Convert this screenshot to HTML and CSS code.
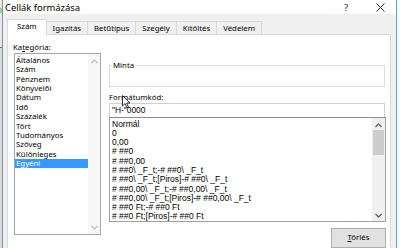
FILE: index.html
```html
<!DOCTYPE html>
<html lang="hu">
<head>
<meta charset="utf-8">
<title>Cellák formázása</title>
<link rel="stylesheet" href="styles.css">
</head>
<body>
<div class="screen">
  <div class="edge-left"></div>
  <div class="dialog">
    <div class="titlebar">
      <span class="title">Cellák formázása</span>
      <span class="help">?</span>
      <svg class="close" width="9" height="9" viewBox="0 0 9 9"><path d="M0.5 0.5 L8.5 8.5 M8.5 0.5 L0.5 8.5" stroke="#2b2b2b" stroke-width="1" fill="none"/></svg>
    </div>
    <div class="body">
      <div class="tabs">
        <div class="tab active">Szám</div>
        <div class="tab">Igazítás</div>
        <div class="tab">Betűtípus</div>
        <div class="tab">Szegély</div>
        <div class="tab">Kitöltés</div>
        <div class="tab">Védelem</div>
      </div>
      <div class="panel">
        <div class="cat">
          <div class="label">Ka<u>t</u>egória:</div>
          <div class="listbox">
            <ul class="cat-items">
              <li>Általános</li>
              <li>Szám</li>
              <li>Pénznem</li>
              <li>Könyvelői</li>
              <li>Dátum</li>
              <li>Idő</li>
              <li>Százalék</li>
              <li>Tört</li>
              <li>Tudományos</li>
              <li>Szöveg</li>
              <li>Különleges</li>
              <li class="selected">Egyéni</li>
            </ul>
            <div class="vscroll light">
              <svg width="7" height="5" viewBox="0 0 7 5"><path d="M0.5 4 L3.5 1 L6.5 4" stroke="#c2c2c2" stroke-width="1.3" fill="none"/></svg>
              <svg width="7" height="5" viewBox="0 0 7 5"><path d="M0.5 1 L3.5 4 L6.5 1" stroke="#c2c2c2" stroke-width="1.3" fill="none"/></svg>
            </div>
          </div>
        </div>
        <div class="right">
          <fieldset class="sample">
            <legend>Minta</legend>
            <div class="sample-body"></div>
          </fieldset>
          <div class="label code-label">Formátumkód:</div>
          <div class="input">"H-"0000</div>
          <div class="fmtlist">
            <ul class="fmt-items">
              <li>Normál</li>
              <li>0</li>
              <li>0,00</li>
              <li># ##0</li>
              <li># ##0,00</li>
              <li># ##0\ _F_t;-# ##0\ _F_t</li>
              <li># ##0\ _F_t;[Piros]-# ##0\ _F_t</li>
              <li># ##0,00\ _F_t;-# ##0,00\ _F_t</li>
              <li># ##0,00\ _F_t;[Piros]-# ##0,00\ _F_t</li>
              <li># ##0 Ft;-# ##0 Ft</li>
              <li># ##0 Ft;[Piros]-# ##0 Ft</li>
            </ul>
            <div class="vscroll">
              <svg width="7" height="5" viewBox="0 0 7 5"><path d="M0.5 4 L3.5 1 L6.5 4" stroke="#606060" stroke-width="1.3" fill="none"/></svg>
              <div class="thumb"></div>
              <div class="track-rest"></div>
              <svg width="7" height="5" viewBox="0 0 7 5"><path d="M0.5 1 L3.5 4 L6.5 1" stroke="#606060" stroke-width="1.3" fill="none"/></svg>
            </div>
          </div>
          <div class="actions">
            <button class="btn"><u>T</u>örlés</button>
          </div>
        </div>
      </div>
    </div>
  </div>
  <div class="edge-right"></div>
  <svg class="cursor" width="9" height="14" viewBox="0 0 9 14"><path d="M0.5 0.5 L0.5 11 L3 8.6 L4.8 12.6 L6.4 11.9 L4.7 8 L8 8 Z" fill="#fff" stroke="#000" stroke-width="0.8" stroke-linejoin="round"/></svg>
</div>
</body>
</html>
```

FILE: styles.css
```css
* { box-sizing: border-box; }
html, body { margin: 0; padding: 0; }
body {
  width: 400px;
  height: 248px;
  overflow: hidden;
  background: #f0f0f0;
  font-family: "Noto Sans", "Open Sans", sans-serif;
  font-size: 7.8px;
  color: #000;
}
.screen {
  position: relative;
  display: flex;
  width: 400px;
  height: 248px;
}
.edge-left {
  width: 2px;
  background: linear-gradient(#e8e8e8 0 8px, #9fcf8a 8px 13px, #e8e8e8 13px 47px, #6a6a6a 47px 48px, #dcdcdc 48px);
}
.edge-right {
  width: 3px;
  background: #fafafa;
}
.dialog {
  width: 395px;
  display: flex;
  flex-direction: column;
  border-left: 1px solid #7f93aa;
  border-right: 1px solid #5aa2e6;
  background: #f0f0f0;
}
.titlebar {
  height: 20px;
  background: #fff;
  display: flex;
  align-items: center;
  padding-left: 2px;
}
.title {
  flex: 1;
  font-size: 9.4px;
  color: #000;
}
.help {
  width: 10px;
  text-align: center;
  font-size: 9.5px;
  color: #333;
}
.close {
  margin-left: 25px;
  margin-right: 11px;
}
.body {
  flex: 1;
  padding: 5px 5px 0 4px;
  display: flex;
  flex-direction: column;
}
.tabs {
  display: flex;
  align-items: flex-end;
  height: 15px;
}
.tab {
  height: 13px;
  line-height: 12px;
  padding: 0 6px;
  border: 1px solid #d9d9d9;
  border-bottom: none;
  margin-left: -1px;
  background: #f0f0f0;
  white-space: nowrap;
}
.tab.active {
  margin-left: 0;
  height: 16px;
  line-height: 13px;
  padding: 0 9px;
  background: #fff;
  margin-bottom: -1px;
  position: relative;
  z-index: 1;
}
.panel {
  flex: 1;
  background: #fff;
  border: 1px solid #d9d9d9;
  border-bottom: none;
  display: flex;
  gap: 8px;
  padding: 7px 4px 0 5px;
}
.label {
  height: 10px;
  line-height: 10px;
  white-space: nowrap;
}
.cat .label { margin-bottom: 1px; }
.listbox {
  margin-left: 1px;
  width: 87px;
  height: 182px;
  border: 1px solid #a6a6a6;
  display: flex;
}
ul { list-style: none; margin: 0; padding: 0; }
.cat-items {
  flex: 1;
  padding-top: 2px;
}
.cat-items li {
  height: 9.36px;
  line-height: 9.36px;
  padding-left: 1px;
  white-space: nowrap;
}
.cat-items li.selected {
  background: #3399ff;
  color: #fff;
}
.vscroll {
  width: 12px;
  background: #f0f0f0;
  display: flex;
  flex-direction: column;
  align-items: center;
  padding: 5px 0 4px;
}
.vscroll.light {
  background: #f7f7f7;
  justify-content: space-between;
}
.right {
  width: 277px;
  display: flex;
  flex-direction: column;
}
.sample {
  margin: 18px 0 0 0;
  padding: 0;
  width: 276px;
  border: 1px solid #dcdcdc;
}
.sample legend {
  padding: 0 1px;
  margin-left: 2px;
  line-height: 10px;
  height: 10px;
  color: #000;
}
.sample-body { height: 16px; }
.code-label { margin-top: 5px; }
.input {
  margin-top: 1px;
  height: 14px;
  width: 276px;
  border: 1px solid #cfcfcf;
  border-bottom: none;
  line-height: 13px;
  padding-left: 2px;
  font-family: "Liberation Sans", Arial, sans-serif;
  font-size: 8.4px;
}
.fmtlist {
  height: 105px;
  border: 1px solid #a0a0a0;
  border-top-color: #8c8c8c;
  display: flex;
}
.fmt-items {
  flex: 1;
  padding: 1.5px 0 0 2px;
  font-family: "Liberation Sans", Arial, sans-serif;
  font-size: 8.5px;
  overflow: hidden;
}
.fmt-items li {
  height: 9.3px;
  line-height: 9.3px;
  white-space: nowrap;
}
.fmtlist .vscroll {
  width: 13px;
  padding: 5px 0 3px;
}
.thumb {
  width: 11px;
  height: 25px;
  margin-top: 2px;
  background: #cdcdcd;
}
.track-rest { flex: 1; }
.actions {
  display: flex;
  justify-content: flex-end;
  margin-top: 6px;
}
.btn {
  width: 55px;
  height: 20px;
  padding: 0 0 2px;
  background: #e1e1e1;
  border: 1px solid #adadad;
  border-radius: 0;
  font-family: "Noto Sans", "Open Sans", sans-serif;
  font-size: 7.8px;
  color: #000;
  line-height: 15px;
  text-align: center;
  align-self: flex-start;
}
.cursor {
  position: absolute;
  left: 122px;
  top: 95px;
}
```
